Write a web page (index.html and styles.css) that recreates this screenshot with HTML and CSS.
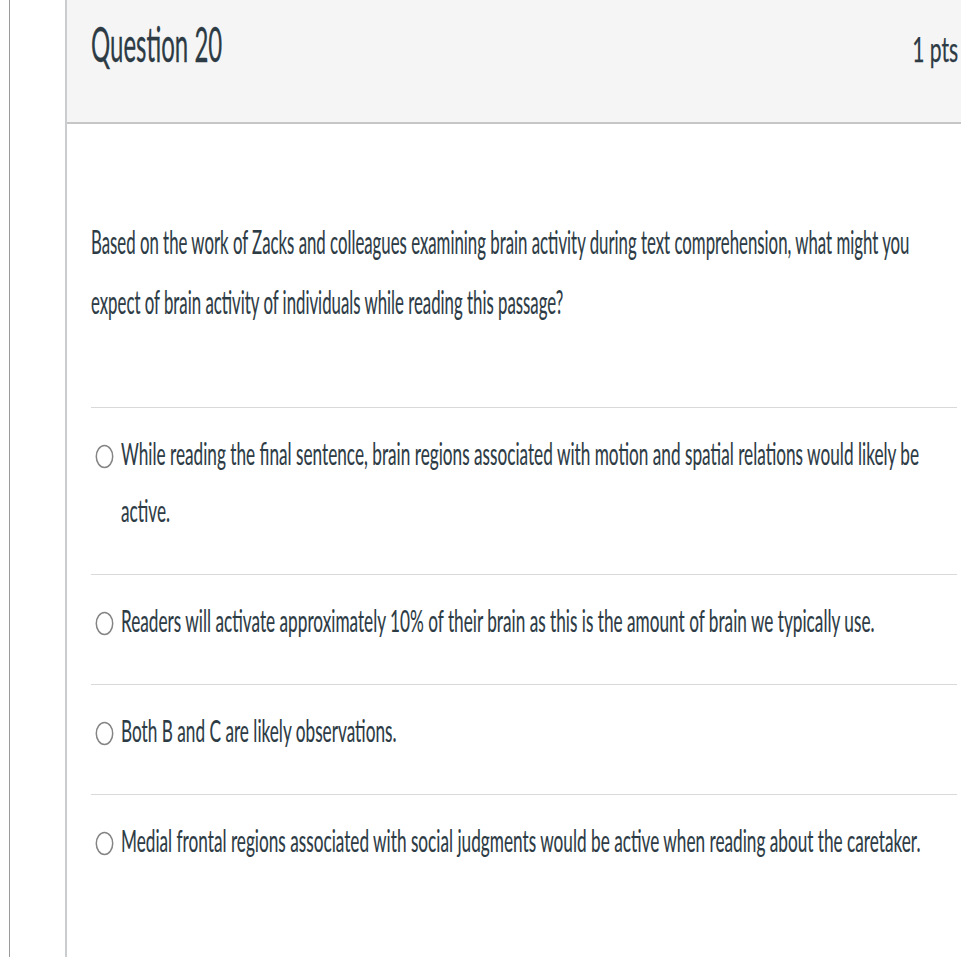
FILE: index.html
```html
<!DOCTYPE html>
<html lang="en">
<head>
<meta charset="utf-8">
<title>Question 20</title>
<link rel="stylesheet" href="styles.css">
</head>
<body>
<div class="page">
  <div class="rail"></div>
  <div class="card">
    <div class="card-header">
      <h2 class="q-title">Question 20</h2>
      <span class="q-points">1 pts</span>
    </div>
    <div class="card-body">
      <p class="q-text">Based on the work of Zacks and colleagues examining brain activity during text comprehension, what might you expect of brain activity of individuals while reading this passage?</p>
      <div class="answers">
        <label class="answer">
          <svg class="radio" width="19" height="25" viewBox="0 0 19 25"><ellipse cx="9.5" cy="12.5" rx="8.2" ry="11" fill="#fff" stroke="#858585" stroke-width="1.5"/></svg>
          <span class="answer-text">While reading the final sentence, brain regions associated with motion and spatial relations would likely be active.</span>
        </label>
        <label class="answer">
          <svg class="radio" width="19" height="25" viewBox="0 0 19 25"><ellipse cx="9.5" cy="12.5" rx="8.2" ry="11" fill="#fff" stroke="#858585" stroke-width="1.5"/></svg>
          <span class="answer-text">Readers will activate approximately 10% of their brain as this is the amount of brain we typically use.</span>
        </label>
        <label class="answer">
          <svg class="radio" width="19" height="25" viewBox="0 0 19 25"><ellipse cx="9.5" cy="12.5" rx="8.2" ry="11" fill="#fff" stroke="#858585" stroke-width="1.5"/></svg>
          <span class="answer-text">Both B and C are likely observations.</span>
        </label>
        <label class="answer">
          <svg class="radio" width="19" height="25" viewBox="0 0 19 25"><ellipse cx="9.5" cy="12.5" rx="8.2" ry="11" fill="#fff" stroke="#858585" stroke-width="1.5"/></svg>
          <span class="answer-text">Medial frontal regions associated with social judgments would be active when reading about the caretaker.</span>
        </label>
      </div>
    </div>
  </div>
</div>
</body>
</html>
```
FILE: styles.css
```css
html, body {
  margin: 0;
  padding: 0;
  overflow: hidden;
  background: #fff;
}
body {
  font-family: Lato, "Open Sans", sans-serif;
  color: #2d3b45;
}
.page {
  display: flex;
  height: 957px;
}
.rail {
  width: 55px;
  margin-left: 9px;
  border-left: 1px solid #9a9a9a;
  flex: none;
}
.card {
  flex: 1;
  min-width: 0;
  border-left: 2px solid #c9cdd0;
  overflow: hidden;
}
.card-header {
  box-sizing: border-box;
  height: 124px;
  background: #f5f5f5;
  border-bottom: 2px solid #c6c6c6;
  padding: 21px 3px 0 24px;
  display: flex;
  align-items: baseline;
}
.q-title {
  margin: 0;
  font-size: 48px;
  line-height: 46px;
  font-weight: 400;
  white-space: nowrap;
  -webkit-text-stroke: 0.3px #2d3b45;
  transform: scaleX(0.5);
  transform-origin: 0 0;
}
.q-points {
  margin-left: auto;
  font-size: 34px;
  line-height: 46px;
  white-space: nowrap;
  -webkit-text-stroke: 0.25px #2d3b45;
  transform: scaleX(0.62);
  transform-origin: 100% 0;
}
.card-body {
  padding: 87px 4px 0 24px;
}
.q-text {
  margin: 0 0 76px;
  width: 1670px;
  font-size: 33px;
  line-height: 60px;
  -webkit-text-stroke: 0.15px #2d3b45;
  transform: scaleX(0.509);
  transform-origin: 0 0;
}
.answer {
  display: flex;
  align-items: flex-start;
  border-top: 1px solid #d9d9d9;
  padding: 17px 0 35px 4px;
}
.radio {
  flex: none;
  margin-top: 19px;
}
.answer-text {
  flex: none;
  margin-left: 7px;
  width: 1504px;
  font-size: 31px;
  line-height: 57px;
  -webkit-text-stroke: 0.15px #2d3b45;
  transform: scaleX(0.555);
  transform-origin: 0 0;
}
```
